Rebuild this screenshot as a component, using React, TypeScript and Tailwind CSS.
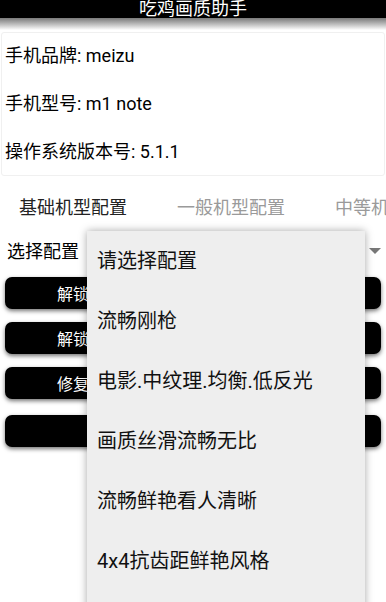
import React from "react";

const font = { fontFamily: 'Roboto, "Noto Sans CJK SC", sans-serif' };

const infoRows = ["手机品牌: meizu", "手机型号: m1 note", "操作系统版本号: 5.1.1"];
const tabs = ["基础机型配置", "一般机型配置", "中等机型配置"];
const buttons = [
  "解锁极限帧率（仅支持部分机型开启）",
  "解锁超高清画质（支持部分机型开启）",
  "修复游戏卡顿闪退（需重启游戏生效）",
  "恢复默认配置",
];
const options = [
  "请选择配置",
  "流畅刚枪",
  "电影.中纹理.均衡.低反光",
  "画质丝滑流畅无比",
  "流畅鲜艳看人清晰",
  "4x4抗齿距鲜艳风格",
  "极致高清真实画面",
];

export default function App() {
  return (
    <div
      className="relative w-[386px] h-[602px] overflow-hidden bg-white text-black"
      style={font}
    >
      {/* Title bar */}
      <div className="h-[18px] bg-black flex items-center justify-center">
        <span className="text-white text-[18px] leading-none">吃鸡画质助手</span>
      </div>
      <div className="h-[12px] bg-gradient-to-b from-[#7a7a7a] to-white"></div>

      {/* Device info */}
      <div className="mt-[2px] mx-[1px] border border-[#f0f0f0] rounded-[3px] flex flex-col">
        {infoRows.map((row, i) => (
          <div
            key={row}
            className={`h-[48px] flex items-center pl-[3px] text-[18px] ${i === 0 ? "-mt-[2px]" : ""}`}
          >
            {row}
          </div>
        ))}
      </div>

      {/* Tabs */}
      <div className="mt-[6px] h-[50px] flex items-center gap-[50px] pl-[19px] whitespace-nowrap">
        {tabs.map((t, i) => (
          <span
            key={t}
            className={`text-[18px] shrink-0 ${i === 0 ? "text-[#222]" : "text-[#9a9a9a]"}`}
          >
            {t}
          </span>
        ))}
      </div>

      {/* Select row */}
      <div className="h-[38px] flex items-center justify-between pl-[7px] pr-[5px]">
        <span className="text-[18px]">选择配置</span>
        <svg width="12" height="6" viewBox="0 0 12 6">
          <path d="M0 0 L12 0 L6 6 Z" fill="#777" />
        </svg>
      </div>

      {/* Buttons */}
      <div className="mt-[7px] flex flex-col gap-[13px] px-[5px]">
        {buttons.map((b, i) => (
          <button
            key={b}
            className={`h-[32px] w-full bg-black rounded-[7px] text-white text-[16px] whitespace-nowrap flex items-center justify-center pt-[3px] shadow-[0_2px_4px_rgba(0,0,0,0.55)] ${i === 3 ? "mt-[3px]" : ""}`}
          >
            {b}
          </button>
        ))}
      </div>

      {/* Open dropdown menu */}
      <div className="absolute left-[87px] top-[231px] w-[278px] bg-[#eeeeee] shadow-[0_0_8px_rgba(0,0,0,0.35)]">
        {options.map((o) => (
          <div key={o} className="h-[60px] flex items-center pl-[10px] text-[20px] text-[#111]">
            {o}
          </div>
        ))}
      </div>
    </div>
  );
}
